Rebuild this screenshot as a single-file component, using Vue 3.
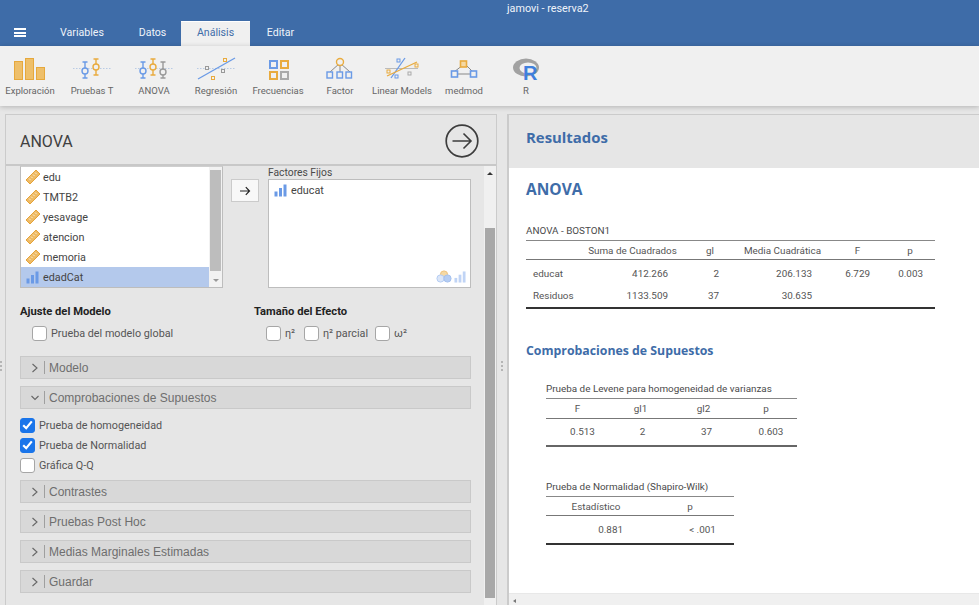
<script setup>
const tabs = [
  { name: 'Variables', width: 84 },
  { name: 'Datos', width: 57 },
  { name: 'Análisis', width: 69, active: true },
  { name: 'Editar', width: 61 }
]

const ribbon = ['Exploración', 'Pruebas T', 'ANOVA', 'Regresión', 'Frecuencias', 'Factor', 'Linear Models', 'medmod', 'R']

const sourceVars = [
  { name: 'edu', type: 'ruler' },
  { name: 'TMTB2', type: 'ruler' },
  { name: 'yesavage', type: 'ruler' },
  { name: 'atencion', type: 'ruler' },
  { name: 'memoria', type: 'ruler' },
  { name: 'edadCat', type: 'bars', selected: true }
]

const effectSizes = ['η²', 'η² parcial', 'ω²']

const assumptions = [
  { label: 'Prueba de homogeneidad', on: true },
  { label: 'Prueba de Normalidad', on: true },
  { label: 'Gráfica Q-Q', on: false }
]

const closedSections = ['Contrastes', 'Pruebas Post Hoc', 'Medias Marginales Estimadas', 'Guardar']

const anovaRows = [
  ['educat', '412.266', '2', '206.133', '6.729', '0.003'],
  ['Residuos', '1133.509', '37', '30.635', '', '']
]
</script>

<template>
  <div class="app">
    <svg class="defs" width="0" height="0">
      <symbol id="ruler" viewBox="0 0 16 16">
        <path d="M1 11 L11 1 L15 5 L5 15 Z" fill="#eebb66" stroke="#e5a33a" stroke-width="1" />
        <path d="M4 9.5l1.6 1.6M6 7.5l1.6 1.6M8 5.5l1.6 1.6M10 3.5l1.6 1.6" stroke="#fbeccb" stroke-width="1" fill="none" />
      </symbol>
      <symbol id="bars" viewBox="0 0 13 13">
        <rect x="0.5" y="7.5" width="3" height="5" />
        <rect x="5" y="4" width="3" height="8.5" />
        <rect x="9.5" y="0.5" width="3" height="12" />
      </symbol>
    </svg>

    <header class="topbar">
      <div class="title">jamovi - reserva2</div>
      <nav class="tabs">
        <div class="burger"><span></span><span></span><span></span></div>
        <div
          v-for="t in tabs"
          :key="t.name"
          class="tab"
          :class="{ active: t.active }"
          :style="{ width: t.width + 'px' }"
        >{{ t.name }}</div>
      </nav>
    </header>

    <section class="ribbon">
      <div v-for="(label, i) in ribbon" :key="label" class="rb-item">
        <svg class="rb-icon" width="62" height="30" viewBox="0 0 62 30" fill="none">
          <g v-if="i === 0" fill="#eebf6a" stroke="#e6a83c">
            <rect x="15.5" y="7.5" width="8" height="18" />
            <rect x="26.5" y="4.5" width="8" height="21" />
            <rect x="37.5" y="13.5" width="8" height="12" />
          </g>
          <g v-else-if="i === 1" stroke-width="1.4">
            <path d="M12 14.5H50" stroke="#b9cbe4" stroke-dasharray="1.5 1.5" stroke-width="1" />
            <path d="M21.5 8h5M24 8v16M21.5 24h5" stroke="#6a9ae6" />
            <circle cx="24" cy="17" r="3" fill="#f0f0f0" stroke="#6a9ae6" />
            <path d="M32.5 5h5M35 5v16M32.5 21h5" stroke="#e9ab3e" />
            <circle cx="35" cy="13" r="3" fill="#f0f0f0" stroke="#e9ab3e" />
          </g>
          <g v-else-if="i === 2" stroke-width="1.4">
            <path d="M12 14.5H50" stroke="#b9cbe4" stroke-dasharray="1.5 1.5" stroke-width="1" />
            <path d="M17.5 8h5M20 8v16M17.5 24h5" stroke="#6a9ae6" />
            <circle cx="20" cy="17" r="3" fill="#f0f0f0" stroke="#6a9ae6" />
            <path d="M27.5 5h5M30 5v16M27.5 21h5" stroke="#e9ab3e" />
            <circle cx="30" cy="13" r="3" fill="#f0f0f0" stroke="#e9ab3e" />
            <path d="M37.5 8h5M40 8v16M37.5 24h5" stroke="#999" />
            <circle cx="40" cy="18" r="3" fill="#f0f0f0" stroke="#999" />
          </g>
          <g v-else-if="i === 3">
            <path d="M12 14.5H51" stroke="#b9cbe4" stroke-dasharray="1.5 1.5" />
            <path d="M13 25L50 4" stroke="#6a9ae6" stroke-width="1.3" />
            <rect x="20.5" y="12.5" width="3" height="3" stroke="#999" fill="#f0f0f0" />
            <rect x="26.5" y="22.5" width="3" height="3" stroke="#e9ab3e" fill="#f0f0f0" />
            <rect x="36.5" y="15.5" width="3" height="3" stroke="#999" fill="#f0f0f0" />
            <rect x="38.5" y="4.5" width="3" height="3" stroke="#e9ab3e" fill="#f0f0f0" />
          </g>
          <g v-else-if="i === 4" stroke-width="2" fill="#f0f0f0">
            <rect x="23" y="7" width="7" height="7" stroke="#6a9ae6" />
            <rect x="34" y="7" width="7" height="7" stroke="#e9ab3e" />
            <rect x="23" y="18" width="7" height="7" stroke="#e9ab3e" />
            <rect x="34" y="18" width="7" height="7" stroke="#aaa" />
          </g>
          <g v-else-if="i === 5">
            <path d="M31 9L21 18M31 9V18M31 9L41 18" stroke="#888" />
            <circle cx="31" cy="8" r="3.5" fill="#f0f0f0" stroke="#e9ab3e" stroke-width="1.4" />
            <g stroke="#6a9ae6" stroke-width="1.4" fill="#f0f0f0">
              <rect x="18" y="18" width="5.5" height="6" />
              <rect x="28" y="18" width="5.5" height="6" />
              <rect x="37" y="18" width="5.5" height="6" />
            </g>
          </g>
          <g v-else-if="i === 6">
            <path d="M14 14.5H47" stroke="#bbb" />
            <path d="M20 24L34 4" stroke="#6a9ae6" stroke-width="1.3" />
            <path d="M16 22L46 8" stroke="#e9ab3e" stroke-width="1.3" />
            <rect x="26" y="5" width="3" height="3" stroke="#6a9ae6" fill="#f0f0f0" />
            <rect x="24" y="21" width="3" height="3" stroke="#6a9ae6" fill="#f0f0f0" />
            <rect x="37" y="18" width="3" height="3" stroke="#aaa" fill="#f0f0f0" />
            <rect x="16" y="16" width="3" height="3" stroke="#e9ab3e" fill="#f0f0f0" />
            <rect x="44" y="10" width="3" height="3" stroke="#e9ab3e" fill="#f0f0f0" />
          </g>
          <g v-else-if="i === 7">
            <path d="M30 11L21 18M33 11L40 18M24 20H37" stroke="#888" />
            <rect x="27.5" y="7" width="6" height="6" stroke="#e9ab3e" stroke-width="1.6" fill="#f5d9a4" />
            <g stroke="#6a9ae6" stroke-width="1.6" fill="#f0f0f0">
              <rect x="18.5" y="17" width="6" height="6" />
              <rect x="37.5" y="17" width="6" height="6" />
            </g>
          </g>
          <g v-else>
            <ellipse cx="31" cy="13.5" rx="13" ry="9" fill="#a2a2a2" />
            <ellipse cx="33" cy="14" rx="8.5" ry="5.5" fill="#f0f0f0" />
            <text x="28" y="25.5" class="r-letter">R</text>
          </g>
        </svg>
        <div class="rb-label">{{ label }}</div>
      </div>
    </section>

    <main class="main">
      <div class="grip left-grip"><i></i><i></i><i></i></div>
      <section class="options">
        <header class="opt-head">
          <h1>ANOVA</h1>
          <svg width="36" height="36" viewBox="0 0 36 36" fill="none" stroke="#3d3d3d">
            <circle cx="18" cy="18" r="15.8" stroke-width="1.7" />
            <path d="M8.5 18H27M19.5 10.5L27 18L19.5 25.5" stroke-width="1.6" />
          </svg>
        </header>
        <div class="opt-scroll">
          <div class="opt-body">
            <div class="vars">
              <div class="source">
                <div class="source-list">
                  <div v-for="v in sourceVars" :key="v.name" class="var" :class="{ selected: v.selected }">
                    <svg v-if="v.type === 'ruler'" class="ico-ruler"><use href="#ruler" /></svg>
                    <svg v-else class="ico-bars"><use href="#bars" /></svg>
                    {{ v.name }}
                  </div>
                </div>
                <div class="mini-scroll">
                  <div class="mini-thumb"></div>
                  <div class="mini-arrow"></div>
                </div>
              </div>
              <button class="move">
                <svg width="12" height="10" viewBox="0 0 12 10" fill="none" stroke="#222" stroke-width="1.2">
                  <path d="M1 5H10.5M6.8 1.2L10.5 5L6.8 8.8" />
                </svg>
              </button>
              <div class="target">
                <div class="target-label">Factores Fijos</div>
                <div class="target-box">
                  <div class="var">
                    <svg class="ico-bars"><use href="#bars" /></svg>
                    educat
                  </div>
                  <div class="accepts">
                    <svg width="16" height="13" viewBox="0 0 16 13">
                      <circle cx="8" cy="4.5" r="3.6" fill="#f5d9a4" stroke="#eec27c" />
                      <circle cx="4.5" cy="8.5" r="3.6" fill="#dbe6f8" stroke="#b5cdf3" />
                      <circle cx="11.5" cy="8.5" r="3.6" fill="#b5cdf3" stroke="#a5c1ee" />
                    </svg>
                    <svg class="ico-bars faint"><use href="#bars" /></svg>
                  </div>
                </div>
              </div>
            </div>

            <div class="groups">
              <div class="fit-group">
                <h2>Ajuste del Modelo</h2>
                <label class="check-row indented"><span class="box"></span>Prueba del modelo global</label>
              </div>
              <div class="effect-group">
                <h2>Tamaño del Efecto</h2>
                <div class="effect-row">
                  <label v-for="e in effectSizes" :key="e" class="check-row"><span class="box"></span>{{ e }}</label>
                </div>
              </div>
            </div>

            <div class="section first">
              <svg class="chev" width="8" height="10" viewBox="0 0 8 10" fill="none" stroke="#666" stroke-width="1.1"><path d="M1.5 1L6 5L1.5 9" /></svg>
              <span class="sep"></span>Modelo
            </div>
            <div class="section">
              <svg class="chev" width="8" height="10" viewBox="0 0 8 10" fill="none" stroke="#666" stroke-width="1.1"><path d="M0.5 3L4 6.5L7.5 3" /></svg>
              <span class="sep"></span>Comprobaciones de Supuestos
            </div>
            <div class="assumptions">
              <label v-for="a in assumptions" :key="a.label" class="check-row">
                <span class="box" :class="{ on: a.on }">
                  <svg v-if="a.on" width="11" height="10" viewBox="0 0 11 10" fill="none" stroke="#fff" stroke-width="2.2"><path d="M1.2 5.2L4.2 8.2L9.8 1.4" /></svg>
                </span>{{ a.label }}
              </label>
            </div>
            <div v-for="s in closedSections" :key="s" class="section closed">
              <svg class="chev" width="8" height="10" viewBox="0 0 8 10" fill="none" stroke="#666" stroke-width="1.1"><path d="M1.5 1L6 5L1.5 9" /></svg>
              <span class="sep"></span>{{ s }}
            </div>
          </div>
          <div class="big-scroll">
            <div class="big-arrow"></div>
            <div class="big-thumb"></div>
          </div>
        </div>
      </section>

      <div class="grip mid-grip"><i></i><i></i><i></i></div>

      <section class="results">
        <header class="res-head">Resultados</header>
        <div class="res-body">
          <h2 class="res-title">ANOVA</h2>
          <table class="stat anova">
            <caption>ANOVA - BOSTON1</caption>
            <colgroup>
              <col style="width: 54px" /><col style="width: 105px" /><col style="width: 50px" />
              <col style="width: 95px" /><col style="width: 55px" /><col style="width: 50px" />
            </colgroup>
            <thead>
              <tr><th></th><th>Suma de Cuadrados</th><th>gl</th><th>Media Cuadrática</th><th>F</th><th>p</th></tr>
            </thead>
            <tbody>
              <tr v-for="r in anovaRows" :key="r[0]">
                <td v-for="(c, i) in r" :key="i">{{ c }}</td>
              </tr>
            </tbody>
          </table>

          <h3 class="res-sub">Comprobaciones de Supuestos</h3>

          <table class="stat levene">
            <caption>Prueba de Levene para homogeneidad de varianzas</caption>
            <colgroup>
              <col style="width: 63px" /><col style="width: 63px" /><col style="width: 63px" /><col style="width: 62px" />
            </colgroup>
            <thead><tr><th>F</th><th>gl1</th><th>gl2</th><th>p</th></tr></thead>
            <tbody><tr><td>0.513</td><td>2</td><td>37</td><td>0.603</td></tr></tbody>
          </table>

          <table class="stat shapiro">
            <caption>Prueba de Normalidad (Shapiro-Wilk)</caption>
            <colgroup><col style="width: 100px" /><col style="width: 88px" /></colgroup>
            <thead><tr><th>Estadístico</th><th>p</th></tr></thead>
            <tbody><tr><td>0.881</td><td>&lt; .001</td></tr></tbody>
          </table>
        </div>
        <div class="res-hscroll"><i></i></div>
      </section>
    </main>
  </div>
</template>

<style>
html, body { margin: 0; overflow: hidden; }
</style>

<style scoped>
.app {
  width: 979px;
  height: 605px;
  overflow: hidden;
  display: flex;
  flex-direction: column;
  background: #e6e6e6;
  font-family: Roboto, "Open Sans", sans-serif;
  color: #4a4a4a;
}
.defs { position: absolute; }

.topbar { background: #3e6ca8; height: 46px; flex: none; color: #fff; box-sizing: border-box; }
.title { height: 21px; font-size: 10.8px; line-height: 17px; padding-left: 507px; color: #f0f4fa; }
.tabs { display: flex; height: 25px; align-items: stretch; }
.burger { width: 40px; padding: 7px 0 0 14px; box-sizing: border-box; }
.burger span { display: block; width: 12px; height: 2px; background: #fff; margin-bottom: 1.5px; }
.tab { text-align: center; font-size: 10.6px; line-height: 24px; color: #f0f4fa; box-sizing: border-box; }
.tab.active { background: #f0f0f0; color: #3e6ca8; border-top: 1px solid #fff; line-height: 22px; }

.ribbon {
  height: 60px;
  flex: none;
  display: flex;
  background: #f0f0f0;
  box-shadow: 0 1px 5px rgba(0, 0, 0, 0.22);
  position: relative;
}
.rb-item { width: 62px; flex: none; text-align: center; padding-top: 8px; box-sizing: border-box; }
.rb-item:first-child { margin-left: -1px; }
.rb-icon { display: block; }
.rb-label { font-size: 9.5px; line-height: 13px; margin: 0 -8px; color: #666; white-space: nowrap; }
.r-letter { font: bold 20px "Liberation Sans", sans-serif; fill: #3f7fdc; }

.main { flex: 1; display: flex; padding: 8px 0 0 5px; min-height: 0; position: relative; }

.grip { display: flex; flex-direction: column; gap: 2px; position: absolute; top: 255px; }
.grip i { width: 2px; height: 2px; background: #b5b5b5; }
.left-grip { left: 0; }
.mid-grip { left: 501px; }

.options {
  width: 492px;
  flex: none;
  border: 1px solid #cbcbcb;
  border-bottom: 0;
  box-sizing: border-box;
  display: flex;
  flex-direction: column;
  min-height: 0;
}
.opt-head {
  height: 51px;
  flex: none;
  box-sizing: border-box;
  border-bottom: 2px solid #c8c8c8;
  display: flex;
  align-items: center;
  justify-content: space-between;
  padding: 3px 16px 0 14px;
}
.opt-head h1 { margin: 0; font-size: 16px; font-weight: 400; color: #404040; }
.opt-scroll { flex: 1; display: flex; min-height: 0; }
.opt-body { width: 478px; flex: none; padding-left: 14px; box-sizing: border-box; }

.vars { display: flex; height: 122px; align-items: flex-start; }
.source {
  width: 203px;
  height: 122px;
  box-sizing: border-box;
  border: 1px solid #bdbdbd;
  border-top-color: #cfcfcf;
  display: flex;
  background: #fff;
  flex: none;
}
.source-list { flex: 1; }
.var {
  height: 20px;
  display: flex;
  align-items: center;
  gap: 2px;
  padding-left: 4px;
  font-size: 10.8px;
  color: #444;
}
.var.selected { background: #b4c9ec; }
.ico-ruler { width: 16px; height: 16px; flex: none; }
.ico-bars { width: 13px; height: 13px; flex: none; fill: #6a9ae6; margin: 0 2px 0 1px; }
.ico-bars.faint { fill: #c0d4f5; width: 12px; height: 12px; margin: 0; }
.mini-scroll { width: 13px; flex: none; background: #f2f2f2; position: relative; }
.mini-thumb { margin: 3px 1px 0 1px; height: 101px; background: #bdbdbd; }
.mini-arrow {
  width: 0; height: 0; margin: 8px auto 0;
  border-left: 3px solid transparent;
  border-right: 3px solid transparent;
  border-top: 3px solid #999;
}
.move {
  width: 28px; height: 23px;
  margin: 13px 9px 0 8px;
  padding: 0;
  flex: none;
  background: #f8f8f8;
  border: 1px solid #cbcbcb;
  display: flex;
  align-items: center;
  justify-content: center;
}
.target { width: 203px; flex: none; position: relative; padding-top: 13px; }
.target-label {
  position: absolute;
  top: 0;
  left: 0;
  font-size: 10.3px;
  line-height: 13px;
  color: #4a4a4a;
}
.target-box {
  height: 109px;
  box-sizing: border-box;
  border: 1px solid #bdbdbd;
  background: #fff;
  position: relative;
}
.accepts { position: absolute; right: 4px; bottom: 4px; display: flex; align-items: flex-end; gap: 2px; }

.groups { display: flex; padding-top: 17px; }
.groups h2 { margin: 0; font-size: 11.2px; line-height: 14px; font-weight: 700; color: #222; }
.fit-group { width: 234px; flex: none; }
.check-row {
  display: flex;
  align-items: center;
  gap: 4px;
  font-size: 10.8px;
  height: 20px;
  color: #555;
}
.indented { margin: 4px 0 0 12px; }
.effect-row { display: flex; margin: 4px 0 0 12px; }
.effect-row .check-row:nth-child(1) { width: 38px; }
.effect-row .check-row:nth-child(2) { width: 71px; }
.box {
  width: 13px; height: 13px;
  flex: none;
  border: 1px solid #a6a6a6;
  border-radius: 3px;
  background: #fff;
  display: flex;
  align-items: center;
  justify-content: center;
}
.box.on { background: #1a75ea; border-color: #1a75ea; }

.section {
  height: 23px;
  width: 451px;
  box-sizing: border-box;
  margin-top: 7px;
  display: flex;
  align-items: center;
  background: #d8d8d8;
  border: 1px solid #c9c9c9;
  font: 12px "Liberation Sans", Arial, sans-serif;
  color: #6e6e6e;
}
.section.first { margin-top: 13px; }
.chev { margin-left: 10px; flex: none; }
.sep { width: 1px; height: 13px; background: #9f9f9f; margin: 0 4px 0 5px; flex: none; }
.assumptions { padding-top: 6px; }
.assumptions + .section { margin-top: 5px; }

.big-scroll { width: 12px; flex: none; background: #f0f0f0; }
.big-arrow {
  width: 0; height: 0; margin: 6px auto 0;
  border-left: 3px solid transparent;
  border-right: 3px solid transparent;
  border-bottom: 3px solid #333;
}
.big-thumb { height: 370px; margin: 53px 1px 0; background: #a8a8a8; }

.results {
  flex: 1;
  margin-left: 10px;
  border-left: 2px solid #cbcbcb;
  border-top: 1px solid #cbcbcb;
  display: flex;
  flex-direction: column;
  min-width: 0;
}
.res-head {
  height: 53px;
  flex: none;
  box-sizing: border-box;
  background: #e6e6e6;
  padding: 12px 0 0 17px;
  font-family: "Open Sans", sans-serif;
  font-size: 14.9px;
  line-height: 20px;
  font-weight: 700;
  color: #3e6ca8;
}
.res-body { flex: 1; background: #fff; padding: 11px 0 0 17px; min-height: 0; overflow: hidden; }
.res-title { margin: 0; font-family: "Open Sans", sans-serif; font-size: 15.5px; line-height: 20px; color: #3e6ca8; font-weight: 700; }
.res-sub { margin: 34px 0 0; font-family: "Open Sans", sans-serif; font-size: 12.3px; line-height: 16px; color: #3e6ca8; font-weight: 700; }
.res-hscroll { height: 12px; flex: none; background: #f0f0f0; border-top: 1px solid #e8e8e8; box-sizing: border-box; position: relative; }
.res-hscroll i {
  position: absolute; left: 4px; top: 5px;
  width: 0; height: 0;
  border-top: 2px solid transparent;
  border-bottom: 2px solid transparent;
  border-right: 3px solid #777;
}

.stat { border-collapse: collapse; table-layout: fixed; font-size: 9.9px; color: #555; }
.stat caption { text-align: left; line-height: 14px; padding-bottom: 2px; white-space: nowrap; color: #4a4a4a; }
.stat th { font-weight: 400; height: 19px; padding: 0; text-align: center; border-top: 1px solid #888; border-bottom: 1px solid #777; box-sizing: border-box; }
.stat td { padding: 0; box-sizing: border-box; text-align: right; white-space: nowrap; }
.stat tbody tr:last-child td { border-bottom: 2px solid #333; }

.anova { width: 409px; margin-top: 25px; }
.anova tbody tr:first-child td { height: 24px; padding-top: 4px; }
.anova tbody tr:last-child td { height: 24px; padding-bottom: 0; }
.anova td:nth-child(1) { text-align: left; padding-left: 7px; }
.anova td:nth-child(2) { padding-right: 17px; }
.anova td:nth-child(3) { padding-right: 16px; }
.anova td:nth-child(4) { padding-right: 18px; }
.anova td:nth-child(5) { padding-right: 15px; }
.anova td:nth-child(6) { padding-right: 12px; }

.levene { width: 251px; margin: 23px 0 0 20px; }
.levene th { height: 20px; }
.levene tbody td { text-align: center; height: 28px; }
.levene tbody td:nth-child(1) { padding-left: 10px; }
.levene tbody td:nth-child(2) { padding-left: 4px; }
.levene tbody td:nth-child(3) { padding-left: 6px; }
.levene tbody td:nth-child(4) { padding-left: 10px; }
.levene tbody tr:last-child td { border-bottom-color: #666; }

.shapiro { width: 188px; margin: 33px 0 0 20px; }
.shapiro tbody td { height: 28px; }
.shapiro td:nth-child(1) { padding-right: 23px; }
.shapiro td:nth-child(2) { padding-left: 25px; text-align: center; }
</style>
